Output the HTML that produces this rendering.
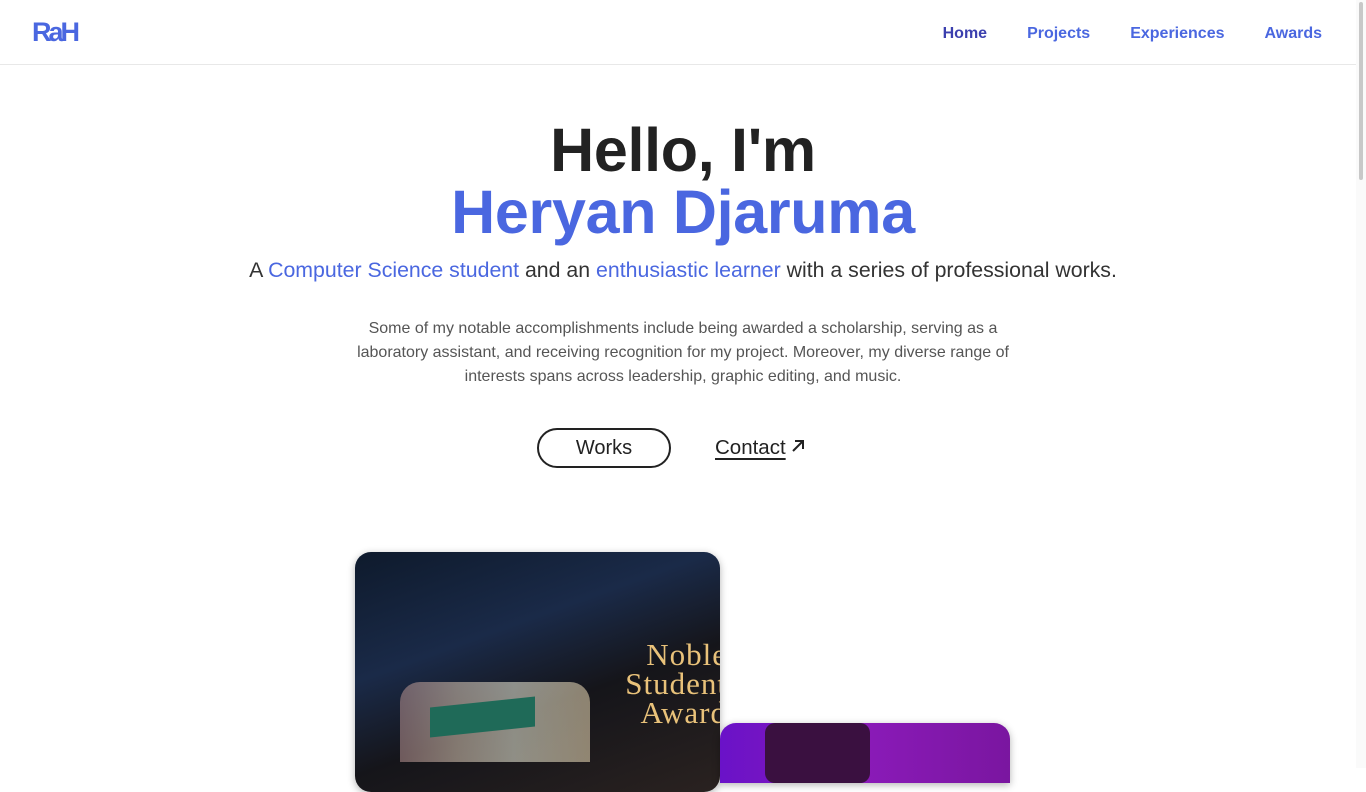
<!DOCTYPE html>
<html><head><meta charset="utf-8"><style>
*{margin:0;padding:0;box-sizing:border-box}
body{width:1366px;height:768px;overflow:hidden;background:#fff;font-family:"Liberation Sans",sans-serif;position:relative}
header{position:absolute;top:0;left:0;width:1356px;height:65px;border-bottom:1px solid #e8e8e8}
.logo{position:absolute;left:32px;top:16px;font-weight:900;color:#4a67e0;font-size:27px;letter-spacing:-3px;line-height:32px}
nav{position:absolute;right:34px;top:25px;display:flex;gap:40px;font-size:16px;font-weight:bold;color:#4a67e0}
nav span:first-child{color:#3b3fae}
.sb{position:absolute;right:0;top:0;width:10px;height:768px;background:#fafafa}
.sb div{position:absolute;left:3px;top:2px;width:4px;height:178px;background:#c8c8c8;border-radius:2px}
h1{position:absolute;top:119px;width:1366px;text-align:center;font-size:61px;line-height:62px;color:#222;letter-spacing:-0.3px}
h1 .b{color:#4a67e0}
.sub{position:absolute;top:258px;width:1366px;text-align:center;font-size:21.3px;color:#333}
.sub span{color:#4a67e0}
.desc{position:absolute;top:317px;left:343px;width:680px;text-align:center;font-size:16px;line-height:24px;color:#555}
.works{position:absolute;left:537px;top:428px;width:134px;height:40px;border:2px solid #222;border-radius:20px;text-align:center;line-height:36px;font-size:20px;color:#222}
.contact{position:absolute;left:715px;top:436px;font-size:20.5px;color:#222}
.contact u{text-underline-offset:4px}
.img1{position:absolute;left:355px;top:552px;width:365px;height:240px;border-radius:16px;overflow:hidden;background:linear-gradient(160deg,#0e1a2c 0%,#1a2a48 35%,#15151a 60%,#2a2220 100%);box-shadow:0 2px 8px rgba(0,0,0,.3)}
.img1 .t{position:absolute;left:232px;top:88px;color:#e9c27a;font-family:"Liberation Serif",serif;font-size:31px;line-height:29px;text-align:right;width:140px;letter-spacing:1px}
.img1 .p{position:absolute;left:45px;top:130px;width:190px;height:80px;background:linear-gradient(90deg,#a88 0,#cba 30%,#ddc 60%,#dca 100%);opacity:.6;border-radius:20px 20px 0 0}
.img1 .g{position:absolute;left:75px;top:150px;width:105px;height:30px;background:#1f6a58;transform:skewY(-6deg)}
.img2{position:absolute;left:720px;top:723px;width:290px;height:60px;border-radius:16px 16px 0 0;background:linear-gradient(90deg,#6a12c8,#8a1ab8 50%,#7a16a0);box-shadow:0 2px 8px rgba(0,0,0,.3)}
.img2 div{position:absolute;left:45px;top:0;width:105px;height:60px;background:#3a1040;border-radius:10px}
</style></head><body>
<header><div class="logo">RaH</div>
<nav><span>Home</span><span>Projects</span><span>Experiences</span><span>Awards</span></nav></header>
<div class="sb"><div></div></div>
<h1>Hello, I'm<br><span class="b">Heryan Djaruma</span></h1>
<div class="sub">A <span>Computer Science student</span> and an <span>enthusiastic learner</span> with a series of professional works.</div>
<div class="desc">Some of my notable accomplishments include being awarded a scholarship, serving as a laboratory assistant, and receiving recognition for my project. Moreover, my diverse range of interests spans across leadership, graphic editing, and music.</div>
<div class="works">Works</div>
<div class="contact"><u>Contact</u> <svg width="14" height="14" viewBox="0 0 14 14" style="vertical-align:1px"><path d="M2 12L12 2M4 2h8v8" stroke="#222" stroke-width="2" fill="none"/></svg></div>
<div class="img1"><div class="p"></div><div class="g"></div><div class="t">Noble<br>Student<br>Award</div></div>
<div class="img2"><div></div></div>
</body></html>
